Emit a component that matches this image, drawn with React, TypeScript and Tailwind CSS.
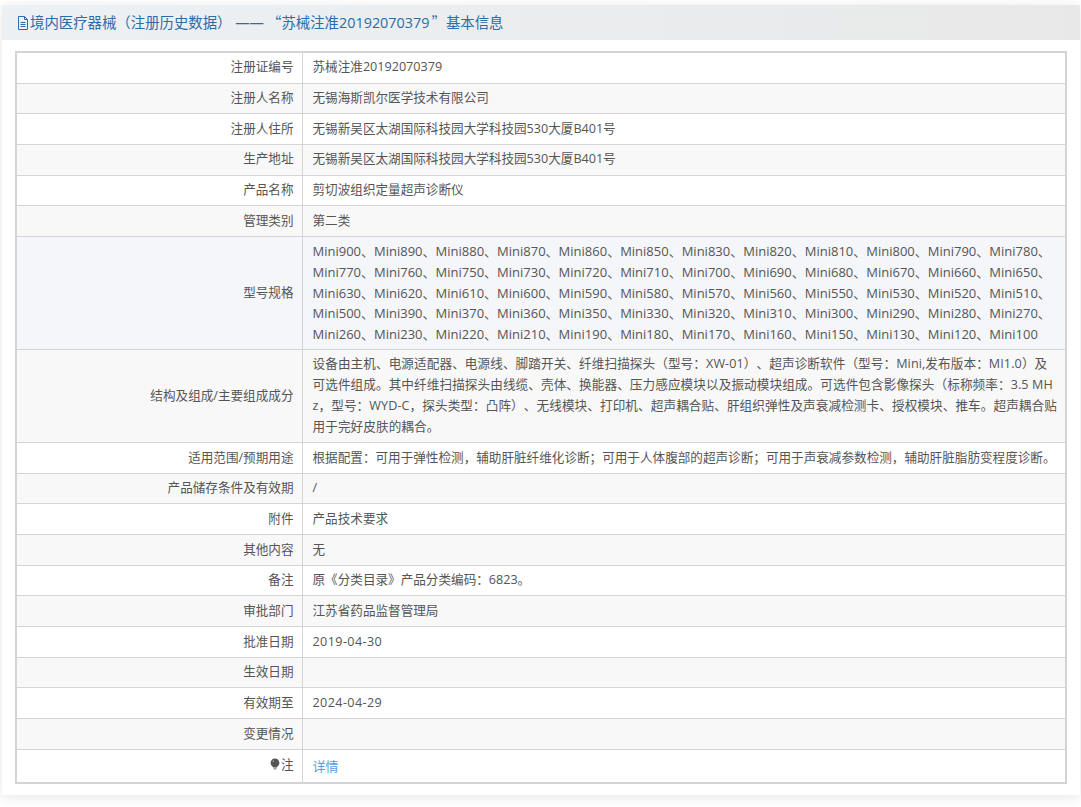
const rows: [string, string][] = [
  ["注册证编号", "苏械注准20192070379"],
  ["注册人名称", "无锡海斯凯尔医学技术有限公司"],
  ["注册人住所", "无锡新吴区太湖国际科技园大学科技园530大厦B401号"],
  ["生产地址", "无锡新吴区太湖国际科技园大学科技园530大厦B401号"],
  ["产品名称", "剪切波组织定量超声诊断仪"],
  ["管理类别", "第二类"],
  [
    "型号规格",
    "Mini900、Mini890、Mini880、Mini870、Mini860、Mini850、Mini830、Mini820、Mini810、Mini800、Mini790、Mini780、Mini770、Mini760、Mini750、Mini730、Mini720、Mini710、Mini700、Mini690、Mini680、Mini670、Mini660、Mini650、Mini630、Mini620、Mini610、Mini600、Mini590、Mini580、Mini570、Mini560、Mini550、Mini530、Mini520、Mini510、Mini500、Mini390、Mini370、Mini360、Mini350、Mini330、Mini320、Mini310、Mini300、Mini290、Mini280、Mini270、Mini260、Mini230、Mini220、Mini210、Mini190、Mini180、Mini170、Mini160、Mini150、Mini130、Mini120、Mini100",
  ],
  [
    "结构及组成/主要组成成分",
    "设备由主机、电源适配器、电源线、脚踏开关、纤维扫描探头（型号：XW-01）、超声诊断软件（型号：Mini,发布版本：MI1.0）及\n可选件组成。其中纤维扫描探头由线缆、壳体、换能器、压力感应模块以及振动模块组成。可选件包含影像探头（标称频率：3.5 MH\nz，型号：WYD-C，探头类型：凸阵）、无线模块、打印机、超声耦合贴、肝组织弹性及声衰减检测卡、授权模块、推车。超声耦合贴\n用于完好皮肤的耦合。",
  ],
  ["适用范围/预期用途", "根据配置：可用于弹性检测，辅助肝脏纤维化诊断；可用于人体腹部的超声诊断；可用于声衰减参数检测，辅助肝脏脂肪变程度诊断。"],
  ["产品储存条件及有效期", "/"],
  ["附件", "产品技术要求"],
  ["其他内容", "无"],
  ["备注", "原《分类目录》产品分类编码：6823。"],
  ["审批部门", "江苏省药品监督管理局"],
  ["批准日期", "2019-04-30"],
  ["生效日期", ""],
  ["有效期至", "2024-04-29"],
  ["变更情况", ""],
];

function DocIcon() {
  return (
    <svg viewBox="0 0 12 14" className="w-[12px] h-[14px] shrink-0" fill="none" stroke="currentColor" strokeWidth="1">
      <path d="M1.5 .5h6l3 3v10h-9z" />
      <path d="M7.5 .5v3h3M3.5 6.5h5M3.5 8.5h5M3.5 10.5h5" />
    </svg>
  );
}

function BulbIcon() {
  return (
    <svg viewBox="0 0 12 14" className="inline-block w-[10px] h-[12px] mr-[1px] align-[-1px]">
      <path fill="#555" d="M6 .5a5.2 5.2 0 0 1 3.2 9.3c-.6.5-.8 1-.8 1.5H3.6c0-.5-.2-1-.8-1.5A5.2 5.2 0 0 1 6 .5z" />
      <path fill="#888" d="M4 12h4v.8L7 13.6H5L4 12.8z" />
      <circle cx="4" cy="3.6" r="1" fill="#999" />
    </svg>
  );
}

export default function App() {
  return (
    <div className="min-h-[807px] bg-white pt-[5px] pl-[2px] pr-[1px] font-['Open_Sans','Noto_Sans_CJK_SC',sans-serif] text-[12.6px] leading-[20.8px] text-[#555] [text-spacing-trim:space-all]">
      <div className="bg-white shadow-[0_2px_12px_rgba(0,0,0,0.1)] pb-[11px]">
        <div className="flex items-center gap-[1px] h-[35px] pl-[15px] bg-linear-to-r from-[#edf1f4] to-[#e8e8e8] text-[14.4px] text-[#2d6ca8]">
          <DocIcon />
          <span>
            境内医疗器械（注册历史数据） ——
            <span className="ml-[3px] font-['Noto_Sans_CJK_SC',sans-serif]">“</span>
            苏械注准20192070379
            <span className="ml-[2px] font-['Noto_Sans_CJK_SC',sans-serif]">”</span>
            基本信息
          </span>
        </div>
        <div className="pt-[11px] pl-[13px]">
          <table className="w-[1052px] table-fixed border-collapse border-2 border-[#d4d4d4]">
            <colgroup>
              <col className="w-[286px]" />
              <col />
            </colgroup>
            <tbody>
              {rows.map(([label, value], i) => (
                <tr key={label} className={i === 6 ? "bg-[#f4f6fa]" : i % 2 === 1 ? "bg-[#f8f8f8]" : "bg-white"}>
                  <td className="border border-[#d4d4d4] text-right py-[4.45px] pl-[8px] pr-[8px]">{label}</td>
                  <td
                    className={`border border-[#d4d4d4] pl-[10px] pr-[7px] break-all ${i === 6 ? "py-[4px] text-[13px]" : "py-[4.45px]"} ${i === 7 ? "whitespace-pre-line tracking-[0.1px]" : ""} ${i === 14 || i === 16 ? "tracking-[0.4px]" : ""}`}
                  >
                    {value}
                  </td>
                </tr>
              ))}
              <tr className="bg-white">
                <td className="border border-[#d4d4d4] text-right py-[5.5px] pl-[8px] pr-[8px]">
                  <BulbIcon />注
                </td>
                <td className="border border-[#d4d4d4] pt-[6.5px] pb-[4.5px] pl-[10px] pr-[7px] text-[13px] text-[#5a9be0]">详情</td>
              </tr>
            </tbody>
          </table>
        </div>
      </div>
    </div>
  );
}
